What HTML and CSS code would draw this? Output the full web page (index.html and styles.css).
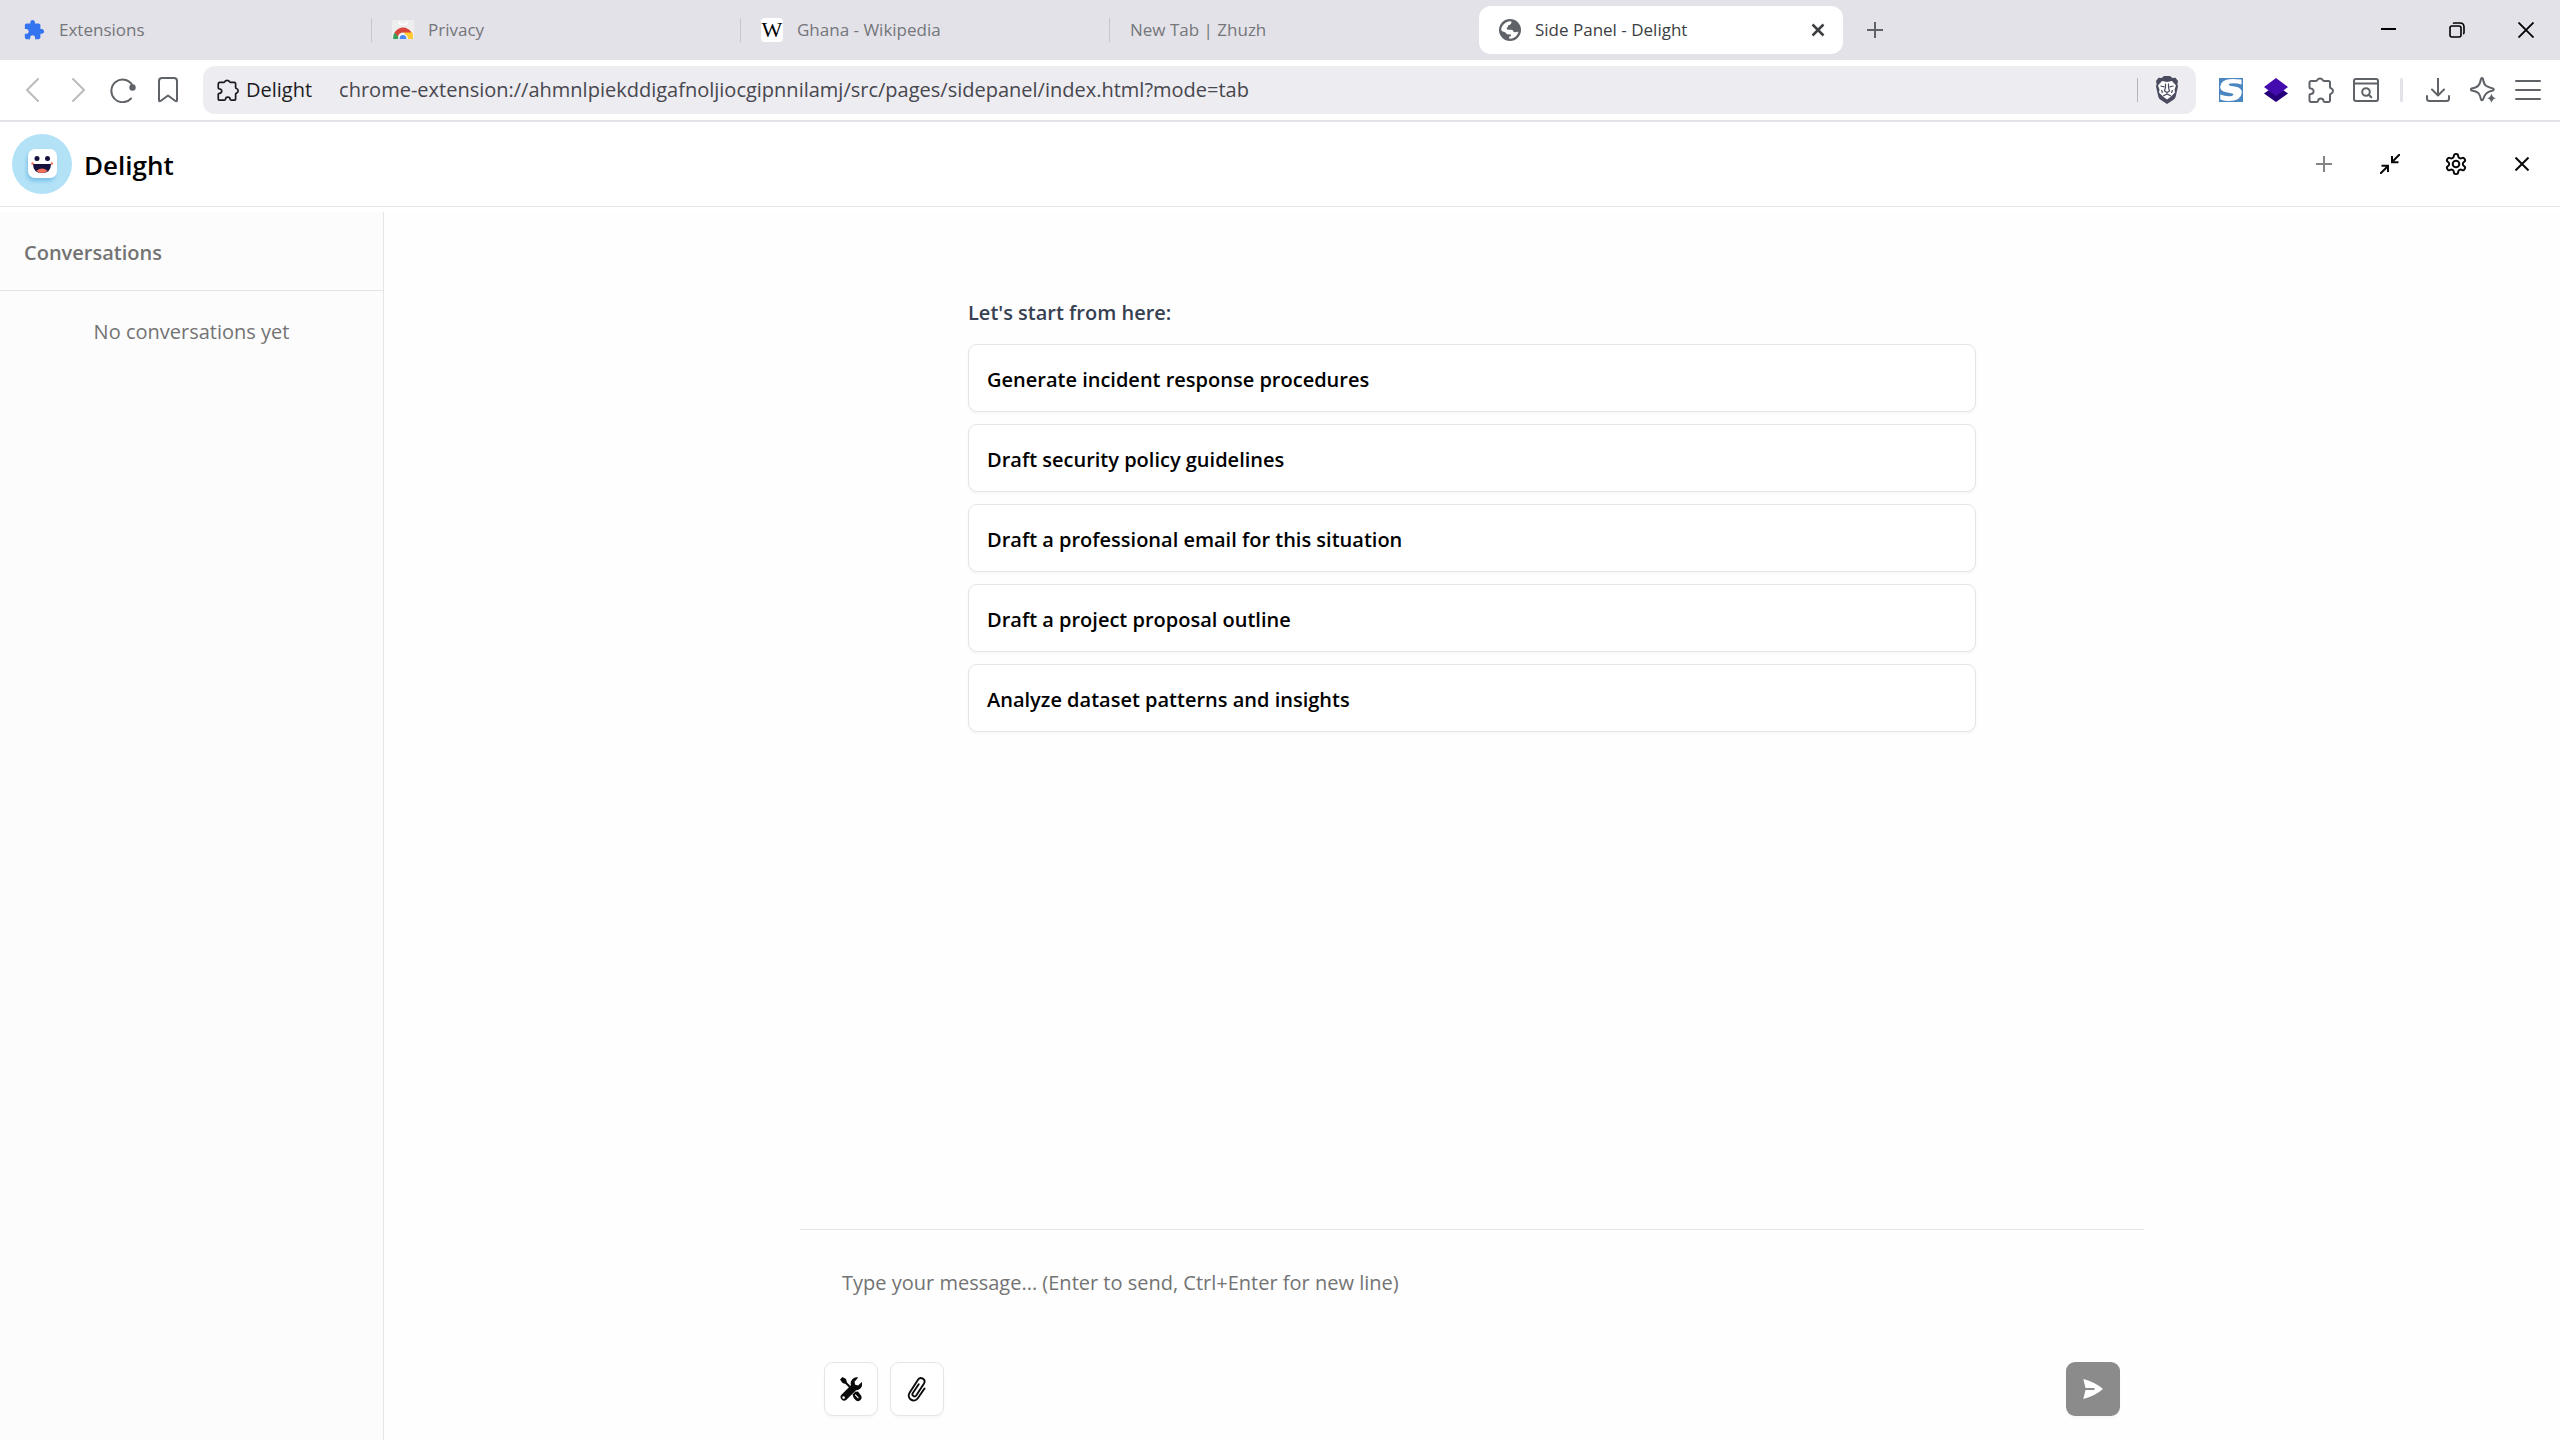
FILE: index.html
```html
<!DOCTYPE html>
<html lang="en">
<head>
  <meta charset="UTF-8">
  <meta name="viewport" content="width=device-width, initial-scale=1.0">
  <title>Side Panel - Delight</title>
  <link rel="stylesheet" href="styles.css">
</head>
<body>
  <!-- shared icon shapes -->
  <svg class="sprite" aria-hidden="true">
    <symbol id="puzzle" viewBox="0 0 24 24">
      <path d="M20.5 11H19V7c0-1.1-.9-2-2-2h-4V3.5C13 2.12 11.88 1 10.5 1S8 2.12 8 3.5V5H4c-1.1 0-1.99.9-1.99 2v3.8H3.5c1.49 0 2.7 1.21 2.7 2.7s-1.21 2.7-2.7 2.7H2V20c0 1.1.9 2 2 2h3.8v-1.5c0-1.49 1.21-2.7 2.7-2.7 1.49 0 2.7 1.21 2.7 2.7V22H17c1.1 0 2-.9 2-2v-4h1.5c1.38 0 2.5-1.12 2.5-2.5S21.88 11 20.5 11z"/>
    </symbol>
    <symbol id="puzzle-line" viewBox="0 0 26 26">
      <path d="M3 4h5q1 0 1.300-1a3 2.500 0 0 1 5.400 0q.3 1 1.300 1h4.500A1.500 1.500 0 0 1 22 5.500V10q0 1 1 1.300 2 .7 2 2.700t-2 2.700q-1 .3-1 1.300v5.500a1.500 1.500 0 0 1-1.500 1.500h-3.700q-1 0-1.300-1a2.700 2.500 0 0 0-5.400 0q-.3 1-1.300 1H3A1.500 1.500 0 0 1 1.500 23.500V18q0-1 1.300-1a2.800 2.700 0 0 0 0-5.400Q1.500 11.500 1.500 10.500v-5A1.500 1.500 0 0 1 3 4z"/>
    </symbol>
  </svg>

  <div class="tab-strip">
    <nav class="tabs" aria-label="Tabs">
      <a class="tab" href="#">
        <svg class="favicon" viewBox="0 0 24 24" fill="#3574f0"><use href="#puzzle"/></svg>
        <span>Extensions</span>
      </a>
      <a class="tab" href="#">
        <svg class="favicon" viewBox="0 0 22 22">
          <path fill="#eeeeef" d="M0 1h22v19H0z"/>
          <path fill="none" stroke="#fff" stroke-width="1.500" d="M7 2.500q0 3 3 3h2q3 0 3-3"/>
          <path fill="#34a05a" d="M1 20a10 10 0 0 1 2-7l5 7z"/>
          <path fill="#fc3" d="M12 13h8a10 10 0 0 1 1 7h-7z"/>
          <path fill="#d9453a" d="M2.500 13.500C5 10 8 8.500 11 8.500s7 2 8.500 5H11q-4 0-5 4z"/>
          <path fill="#fff" d="M6 20a5 5 0 0 1 10 0z"/>
          <path fill="#4a8af4" d="M7.500 20a3.500 4 0 0 1 7 0z"/>
        </svg>
        <span>Privacy</span>
      </a>
      <a class="tab" href="#">
        <span class="favicon wiki" aria-hidden="true">W</span>
        <span>Ghana - Wikipedia</span>
      </a>
      <a class="tab no-line" href="#"><span>New Tab | Zhuzh</span></a>
      <div class="tab active">
        <svg class="favicon" viewBox="0 0 22 22">
          <circle cx="11" cy="11" r="11" fill="#5f6368"/>
          <path fill="#fff" d="M2.200 11C2.500 6.500 6 3 10.500 2.300l2 .3q.3 2-1.500 3.200L9 6.500q.5 1.500-1.500 2.500 0 2 2 1.800l3-.1q2 .3 2.200 2.300l1.300.3q2-.8 3.400-.4-1.500 5-6.400 6.600l-2.600.3-.4-2q2.500-.3 2-2.300l-4-.3q-1.500-2.500-4.800-3z"/>
        </svg>
        <span>Side Panel - Delight</span>
        <button class="tab-close" aria-label="Close tab">
          <svg width="14" height="14" viewBox="0 0 14 14" fill="none" stroke="#3c4043" stroke-width="2.500"><path d="M1.500 1.500l11 11M12.500 1.500l-11 11"/></svg>
        </button>
      </div>
    </nav>
    <button class="new-tab" aria-label="New tab">
      <svg width="16" height="16" viewBox="0 0 16 16" fill="none" stroke="#5f6368" stroke-width="2"><path d="M8 0v16M0 8h16"/></svg>
    </button>
    <div class="window-controls">
      <button aria-label="Minimize">
        <svg width="16" height="16" viewBox="0 0 16 16" stroke="#000" stroke-width="2"><path d="M1 7h15"/></svg>
      </button>
      <button aria-label="Restore">
        <svg width="16" height="16" viewBox="0 0 16 16" fill="none" stroke="#000" stroke-width="1.600"><rect x="1" y="4" width="11" height="11" rx="2"/><path d="M4 1.500q.5-.5 1.500-.5H11q4 0 4 4v5.500q0 1-.8 1.500"/></svg>
      </button>
      <button aria-label="Close window">
        <svg width="16" height="16" viewBox="0 0 16 16" stroke="#000" stroke-width="1.800"><path d="M.5.5l15 15M15.500.5l-15 15"/></svg>
      </button>
    </div>
  </div>

  <div class="toolbar">
    <button class="tool faded" aria-label="Back">
      <svg width="24" height="24" viewBox="0 0 24 24"><path d="M17 1L6 12l11 11"/></svg>
    </button>
    <button class="tool faded" aria-label="Forward">
      <svg width="24" height="24" viewBox="0 0 24 24"><path d="M7 1l11 11L7 23"/></svg>
    </button>
    <button class="tool" aria-label="Reload">
      <svg width="26" height="26" viewBox="0 0 26 26"><path d="M22 7.500A11.300 11.300 0 1 0 21 21.500"/><circle cx="22.500" cy="10.500" r="3.200" fill="#5f6368" stroke="none"/></svg>
    </button>
    <button class="tool" aria-label="Bookmark">
      <svg width="26" height="26" viewBox="0 0 26 26"><path d="M4 4a3 3 0 0 1 3-3h12a3 3 0 0 1 3 3v19q0 2-1.600 1L13 18.500 5.600 24Q4 25 4 23z"/></svg>
    </button>

    <div class="address-bar">
      <svg class="site-icon" width="22" height="22" viewBox="0 0 26 26"><use href="#puzzle-line"/></svg>
      <span class="site-name">Delight</span>
      <input class="url" type="text" aria-label="Address" value="chrome-extension://ahmnlpiekddigafnoljiocgipnnilamj/src/pages/sidepanel/index.html?mode=tab">
      <span class="shield-line"></span>
      <button class="shield" aria-label="Shields">
        <svg width="24" height="28" viewBox="0 0 24 28">
          <path fill="#4b4c60" d="M6.500 2L9 0h6l2.500 2 3-.3L23 5l-.6 3 .6 2.500-2.300 10.200q-.5 1.800-2.200 3L12 28l-6.500-4.300q-1.700-1.200-2.200-3L1 10.500 1.600 8 1 5l2.500-3.300z"/>
          <path fill="#fff" d="M7 5l5 1 5-1 4 4.500-1.500 4 .5 3-4 4L12 23.500 8 20.500 4 16.500l.5-3L3 9.500z"/>
          <path fill="none" stroke="#4b4c60" stroke-width="1.200" d="M5.500 10l4 .8M18.500 10l-4 .8M10.500 7.500v4L9.500 15l2.500 1.500 2.500-1.500-1-3.500v-4M12 16.500v2M8 20l4-2 4 2M6.500 14l1 3M17.500 14l-1 3"/>
        </svg>
      </button>
    </div>

    <button class="tool" aria-label="S extension">
      <svg width="24" height="24" viewBox="0 0 24 24">
        <path stroke="none" fill="#4a86bf" d="M0 0h24v24H0z"/>
        <path stroke="none" fill="#fff" d="M22.500 1.500v5Q16 4.500 11 5.500q-2.500 1.200 0 2.200l6 1q6 1.300 5.800 6-.8 8.300-12.800 8.300-5 0-8.700-1.500v-5q6 2.500 11.500 1.500 3-1.300.5-2.500l-6-1.200Q1 13 1.200 8.500 2 1.200 13 1q5 0 9.500.5z"/>
      </svg>
    </button>
    <button class="tool" aria-label="Layers extension">
      <svg width="24" height="24" viewBox="0 0 24 24"><path stroke="none" fill="#25007a" d="M0 15.500L5 12h14l5 3.500L12 24z"/><path stroke="none" fill="#440cae" d="M12 0l12 9-12 9L0 9z"/></svg>
    </button>
    <button class="tool" aria-label="Extensions">
      <svg width="26" height="26" viewBox="0 0 26 26"><use href="#puzzle-line"/></svg>
    </button>
    <button class="tool" aria-label="Search tabs">
      <svg width="26" height="26" viewBox="0 0 26 26"><rect x="1" y="2" width="24" height="22" rx="2"/><path d="M1 6.500h24"/><circle cx="13" cy="15" r="3.800"/><path d="M15.800 17.800l2.500 2.500"/></svg>
    </button>
    <span class="tool-line"></span>
    <button class="tool" aria-label="Downloads">
      <svg width="24" height="24" viewBox="0 0 24 24"><path d="M12 0v17M6 11.500l6 6 6-6M1 18v2.500Q1 23 3.500 23h17q2.500 0 2.500-2.500V18"/></svg>
    </button>
    <button class="tool" aria-label="Assistant">
      <svg width="26" height="26" viewBox="0 0 26 26"><path d="M11 2q1-1.800 2 0 .8 5 3 6.800Q18 10.300 23 11.500q1.500 1 0 2-4.500.8-6.500 2.800Q14.500 18 13 22.500q-1 1.500-2 0-1-4.800-2.700-6.600Q6.500 14.300 1.500 13.500q-1.300-1 0-2 5-.9 6.700-2.700Q10 7 11 2z"/><path fill="#5f6368" stroke="none" d="M21.500 16.500q.8 4 4.500 4.800-3.700.8-4.500 4.700-.8-3.900-4.500-4.700 3.700-.8 4.500-4.800z"/></svg>
    </button>
    <button class="tool" aria-label="Menu">
      <svg width="26" height="22" viewBox="0 0 26 22"><path d="M1 2h24M1 11h24M1 20h24"/></svg>
    </button>
  </div>

  <header class="app-header">
    <svg class="logo" width="60" height="60" viewBox="0 0 60 60">
      <defs>
        <filter id="soft" x="-50%" y="-50%" width="200%" height="200%"><feGaussianBlur stdDeviation="2"/></filter>
      </defs>
      <circle cx="30" cy="30" r="30" fill="#b3e2f7"/>
      <rect x="15" y="18" width="28" height="29" rx="7" fill="#78bfe6" filter="url(#soft)"/>
      <rect x="16" y="15" width="29" height="29" rx="7" fill="#fff"/>
      <circle cx="25" cy="24.500" r="2.500" fill="#16123f"/>
      <circle cx="35.500" cy="24.500" r="2.500" fill="#16123f"/>
      <path fill="#16123f" d="M21 30h18q0 9-9 9t-9-9z"/>
      <path fill="#f2705c" d="M24.500 36.800q5.500-4.500 11 0Q33.500 39 30 39t-5.500-2.200z"/>
      <circle cx="20.500" cy="29.500" r="1.200" fill="#f2705c"/>
      <circle cx="39.800" cy="29.500" r="1.200" fill="#f2705c"/>
    </svg>
    <h1>Delight</h1>
    <div class="header-actions">
      <button class="muted" aria-label="New conversation">
        <svg width="16" height="16" viewBox="0 0 16 16"><path d="M8 0v16M0 8h16"/></svg>
      </button>
      <button aria-label="Collapse">
        <svg width="20" height="20" viewBox="0 0 20 20"><path d="M20 0l-7.500 7.500M12 2v6.200h6.500M0 20l7.500-7.500M1.500 11.800H8V18"/></svg>
      </button>
      <button aria-label="Settings">
        <svg width="24" height="24" viewBox="0 0 24 24"><path d="M12.220 2h-.44a2 2 0 0 0-2 2v.18a2 2 0 0 1-1 1.730l-.43.25a2 2 0 0 1-2 0l-.15-.08a2 2 0 0 0-2.730.73l-.22.38a2 2 0 0 0 .73 2.730l.15.1a2 2 0 0 1 1 1.720v.51a2 2 0 0 1-1 1.740l-.15.09a2 2 0 0 0-.73 2.730l.22.38a2 2 0 0 0 2.730.73l.15-.08a2 2 0 0 1 2 0l.43.25a2 2 0 0 1 1 1.730V20a2 2 0 0 0 2 2h.44a2 2 0 0 0 2-2v-.18a2 2 0 0 1 1-1.730l.43-.25a2 2 0 0 1 2 0l.15.08a2 2 0 0 0 2.730-.73l.22-.39a2 2 0 0 0-.73-2.730l-.15-.08a2 2 0 0 1-1-1.740v-.5a2 2 0 0 1 1-1.740l.15-.09a2 2 0 0 0 .73-2.730l-.22-.38a2 2 0 0 0-2.730-.73l-.15.08a2 2 0 0 1-2 0l-.43-.25a2 2 0 0 1-1-1.730V4a2 2 0 0 0-2-2z"/><circle cx="12" cy="12" r="3.300"/></svg>
      </button>
      <button aria-label="Close">
        <svg width="14" height="14" viewBox="0 0 14 14"><path d="M.5.5l13 13M13.500.5l-13 13"/></svg>
      </button>
    </div>
  </header>

  <div class="app-body">
    <aside class="sidebar">
      <h2>Conversations</h2>
      <p>No conversations yet</p>
    </aside>

    <main class="chat">
      <section class="starters">
        <h3>Let's start from here:</h3>
        <button>Generate incident response procedures</button>
        <button>Draft security policy guidelines</button>
        <button>Draft a professional email for this situation</button>
        <button>Draft a project proposal outline</button>
        <button>Analyze dataset patterns and insights</button>
      </section>

      <form class="composer">
        <textarea aria-label="Message" placeholder="Type your message... (Enter to send, Ctrl+Enter for new line)"></textarea>
        <div class="composer-actions">
          <button class="square" type="button" aria-label="Tools">
            <svg width="22" height="26" viewBox="0 0 22 26">
              <path fill="#0a0a0a" d="M0 3.500L2.500 1 6 3l1 3.500L10.500 10 9 11.500 5.500 8 2.500 7z"/>
              <path fill="#0a0a0a" d="M18.300 1.500a6 6 0 0 0-7.300 7.700L1.200 19a3.600 3.600 0 0 0 5 5L16 14.200A6 6 0 0 0 21.700 6l-3.500 3.500-3-.7-.7-3zM3.600 20.300a1.300 1.300 0 1 1 0 2.600 1.300 1.300 0 0 1 0-2.600z" fill-rule="evenodd"/>
              <path fill="#0a0a0a" fill-rule="evenodd" d="M12.500 18.500l3-3q1 .3 2.500 0l3 4q1.500 2.500-.5 4.500t-4.500.5q-3-2.500-3.500-6zM15.500 18.200l-.8.8 3.300 3.500.8-.8z"/>
            </svg>
          </button>
          <button class="square" type="button" aria-label="Attach file">
            <svg width="22" height="26" viewBox="0 0 22 26" fill="none" stroke="#0a0a0a" stroke-width="1.900" stroke-linecap="round"><path d="M18.500 12.500l-6.700 9.700C8 27.500.2 22.500 3.600 16.700L12 3.800c2.500-3.700 8.300-.5 6 3.600l-7.800 12c-1.500 2.200-4.800.2-3.500-2.200l6-8.900"/></svg>
          </button>
          <button class="square send" type="submit" aria-label="Send">
            <svg width="22" height="22" viewBox="0 0 22 22" fill="#fff"><path d="M1.300 1Q13 4 21 11 13 18 1.300 21l2.200-9H12.500v-2H3.500z"/></svg>
          </button>
        </div>
      </form>
    </main>
  </div>
</body>
</html>
```
FILE: styles.css
```css
* {
  box-sizing: border-box;
  margin: 0;
  padding: 0;
}

body {
  font-family: 'Open Sans', 'Noto Sans', sans-serif;
  font-size: 20px;
  line-height: 30px;
  color: #000;
  background-color: #fff;
  display: flex;
  flex-direction: column;
  min-height: 100vh;
}

button {
  display: flex;
  align-items: center;
  justify-content: center;
  border: none;
  background: none;
  font: inherit;
  color: inherit;
  cursor: pointer;
}

.sprite {
  display: none;
}

/* browser tabs */
.tab-strip {
  display: flex;
  align-items: center;
  height: 60px;
  padding-left: 3px;
  background-color: #e3e2e8;
}

.tabs {
  display: flex;
  align-items: center;
  flex: 0 1 1841px;
  min-width: 0;
}

.tab {
  display: flex;
  align-items: center;
  flex: 0 1 369px;
  gap: 14px;
  height: 48px;
  padding-left: 20px;
  font-size: 17px;
  white-space: nowrap;
  text-decoration: none;
  color: #74767a;
}

.tab::after {
  content: '';
  width: 1px;
  height: 24px;
  margin-left: auto;
  background-color: #c6c6cb;
}

.tab.no-line::after,
.tab.active::after {
  display: none;
}

.tab.active {
  flex-basis: 364px;
  background-color: #fff;
  border-radius: 12px;
  color: #3c4043;
}

.favicon {
  flex: none;
  width: 22px;
  height: 22px;
}

.wiki {
  height: 24px;
  border-radius: 4px;
  background-color: #fff;
  color: #000;
  font-family: 'Liberation Serif', serif;
  font-size: 22px;
  line-height: 24px;
  text-align: center;
}

.tab-close {
  width: 28px;
  height: 28px;
  margin-left: auto;
  margin-right: 11px;
}

.new-tab {
  width: 48px;
  height: 48px;
  margin-left: 7px;
}

.window-controls {
  display: flex;
  margin-left: auto;
}

.window-controls button {
  width: 69px;
  height: 60px;
}

/* browser toolbar */
.toolbar {
  display: flex;
  align-items: center;
  height: 62px;
  padding: 0 10px;
  border-bottom: 2px solid #e3e2e8;
}

.tool {
  flex: none;
  width: 45px;
  height: 45px;
}

.tool svg {
  fill: none;
  stroke: #5f6368;
  stroke-width: 2;
  stroke-linecap: round;
  stroke-linejoin: round;
}

.faded svg {
  stroke: #bbbcbf;
}

.address-bar {
  display: flex;
  align-items: center;
  flex: 1;
  height: 48px;
  margin: 0 12px 0 13px;
  padding: 0 12px 0 14px;
  border-radius: 12px;
  background-color: #edecf1;
}

.site-icon {
  fill: none;
  stroke: #1b1b1f;
  stroke-width: 2;
  stroke-linejoin: round;
}

.site-name {
  margin: 0 27px 0 7px;
  color: #1b1b1f;
}

.url {
  flex: 1;
  min-width: 0;
  border: none;
  outline: none;
  background: none;
  font: inherit;
  color: #47474e;
}

.shield-line {
  width: 1px;
  height: 24px;
  background-color: #b5b5bb;
}

.shield {
  width: 34px;
  height: 34px;
  margin-left: 12px;
}

.tool-line {
  width: 3px;
  height: 24px;
  margin: 0 12px;
  border-radius: 2px;
  background-color: #e3e2e8;
}

/* app header */
.app-header {
  display: flex;
  align-items: center;
  height: 85px;
  padding: 0 11px 0 12px;
  border-bottom: 1px solid #e5e5e5;
}

.app-header h1 {
  margin-left: 12px;
  padding-top: 2px;
  font-size: 26px;
  font-weight: 600;
  line-height: 36px;
}

.header-actions {
  display: flex;
  gap: 12px;
  margin-left: auto;
}

.header-actions button {
  width: 54px;
  height: 54px;
}

.header-actions svg {
  fill: none;
  stroke: #0a0a0a;
  stroke-width: 2;
}

.header-actions .muted svg {
  stroke: #848484;
}

.app-body {
  display: flex;
  flex: 1;
  padding-top: 5px;
}

/* sidebar */
.sidebar {
  width: 384px;
  border-right: 1px solid #e5e5e5;
  background-color: #fcfcfc;
  color: #737373;
}

.sidebar h2 {
  padding: 26px 24px 22px;
  border-bottom: 1px solid #e5e5e5;
  font-size: 20px;
  font-weight: 600;
}

.sidebar p {
  padding: 26px 24px;
  text-align: center;
}

/* chat */
.chat {
  display: flex;
  flex-direction: column;
  align-items: center;
  justify-content: space-between;
  flex: 1;
  background-color: #fefefe;
}

.starters {
  display: flex;
  flex-direction: column;
  gap: 12px;
  width: 100%;
  max-width: 1008px;
  padding-top: 86px;
}

.starters h3 {
  margin-bottom: 4px;
  font-size: 20px;
  font-weight: 600;
  color: #374151;
}

.starters button {
  justify-content: flex-start;
  height: 68px;
  padding: 3px 18px 0;
  border: 1px solid #e5e5e5;
  border-radius: 9px;
  background-color: #fff;
  box-shadow: 0 2px 3px rgba(0, 0, 0, 0.03);
  font-weight: 600;
}

.composer {
  width: 100%;
  max-width: 1344px;
  padding: 24px;
  border-top: 1px solid #e5e5e5;
}

.composer textarea {
  display: block;
  width: 100%;
  height: 96px;
  margin-bottom: 12px;
  padding: 14px 18px;
  border: none;
  outline: none;
  resize: none;
  background: none;
  font: inherit;
  color: #0a0a0a;
}

.composer textarea::placeholder {
  color: #737373;
}

.composer-actions {
  display: flex;
  gap: 12px;
}

.square {
  width: 54px;
  height: 54px;
  border: 1px solid #e5e5e5;
  border-radius: 9px;
  background-color: #fff;
  box-shadow: 0 2px 3px rgba(0, 0, 0, 0.03);
}

.send {
  margin-left: auto;
  border: none;
  background-color: #8b8b8b;
}
```
